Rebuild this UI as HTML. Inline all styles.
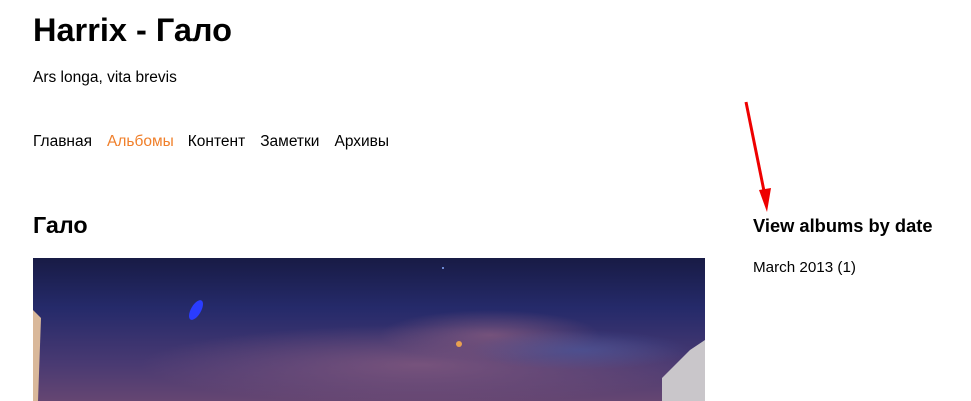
<!DOCTYPE html>
<html><head><meta charset="utf-8"><style>
body{margin:0;width:971px;height:401px;overflow:hidden;background:#fff;font-family:"Liberation Sans",Arial,sans-serif;color:#000;position:relative}
.a{position:absolute;white-space:nowrap}
h1{position:absolute;left:33px;top:12px;margin:0;font-size:32.5px;font-weight:bold}
</style></head><body>
<h1>Harrix - Гало</h1>
<div class="a" style="left:33px;top:69px;font-size:15.5px">Ars longa, vita brevis</div>
<div class="a" style="left:33px;top:133px;font-size:15.5px">Главная<span style="margin-left:15px;color:#f07f2a">Альбомы</span><span style="margin-left:14px">Контент</span><span style="margin-left:15px">Заметки</span><span style="margin-left:15px">Архивы</span></div>
<div class="a" style="left:33px;top:212px;font-size:23.3px;font-weight:bold">Гало</div>
<div class="a" style="left:753px;top:215px;font-size:18.3px;font-weight:bold">View albums by date</div>
<div class="a" style="left:753px;top:259px;font-size:15.2px">March 2013 (1)</div>
<svg class="a" style="left:0;top:0" width="971" height="401">
<defs>
<linearGradient id="g" x1="0" y1="0" x2="0" y2="1"><stop offset="0" stop-color="#181b45"/><stop offset="0.35" stop-color="#252a6a"/><stop offset="0.75" stop-color="#4a3a72"/><stop offset="1" stop-color="#654672"/></linearGradient>
<radialGradient id="c" cx="0.5" cy="0.5" r="0.5"><stop offset="0" stop-color="#8a5d80" stop-opacity="0.7"/><stop offset="1" stop-color="#8a5d80" stop-opacity="0"/></radialGradient>
<radialGradient id="b" cx="0.5" cy="0.5" r="0.5"><stop offset="0" stop-color="#4a5aa0" stop-opacity="0.6"/><stop offset="1" stop-color="#4a5aa0" stop-opacity="0"/></radialGradient>
</defs>
<rect x="33" y="258" width="672" height="143" fill="url(#g)"/>
<ellipse cx="420" cy="365" rx="280" ry="40" fill="url(#c)"/>
<ellipse cx="490" cy="335" rx="110" ry="25" fill="url(#c)"/>
<ellipse cx="580" cy="350" rx="110" ry="20" fill="url(#b)"/>
<ellipse cx="196" cy="310" rx="5" ry="11" fill="#2a3cff" transform="rotate(30 196 310)"/>
<circle cx="459" cy="344" r="3" fill="#e8a050"/>
<circle cx="443" cy="268" r="1" fill="#8af"/>
<polygon points="33,310 41,318 38,401 33,401" fill="#d9b89a"/>
<polygon points="705,340 690,350 662,378 662,401 705,401" fill="#c9c6ca"/>
<line x1="746" y1="102" x2="765" y2="196" stroke="#e00" stroke-width="3"/>
<polygon points="759,190 771,188 767,212" fill="#e00"/>
</svg>
</body></html>
